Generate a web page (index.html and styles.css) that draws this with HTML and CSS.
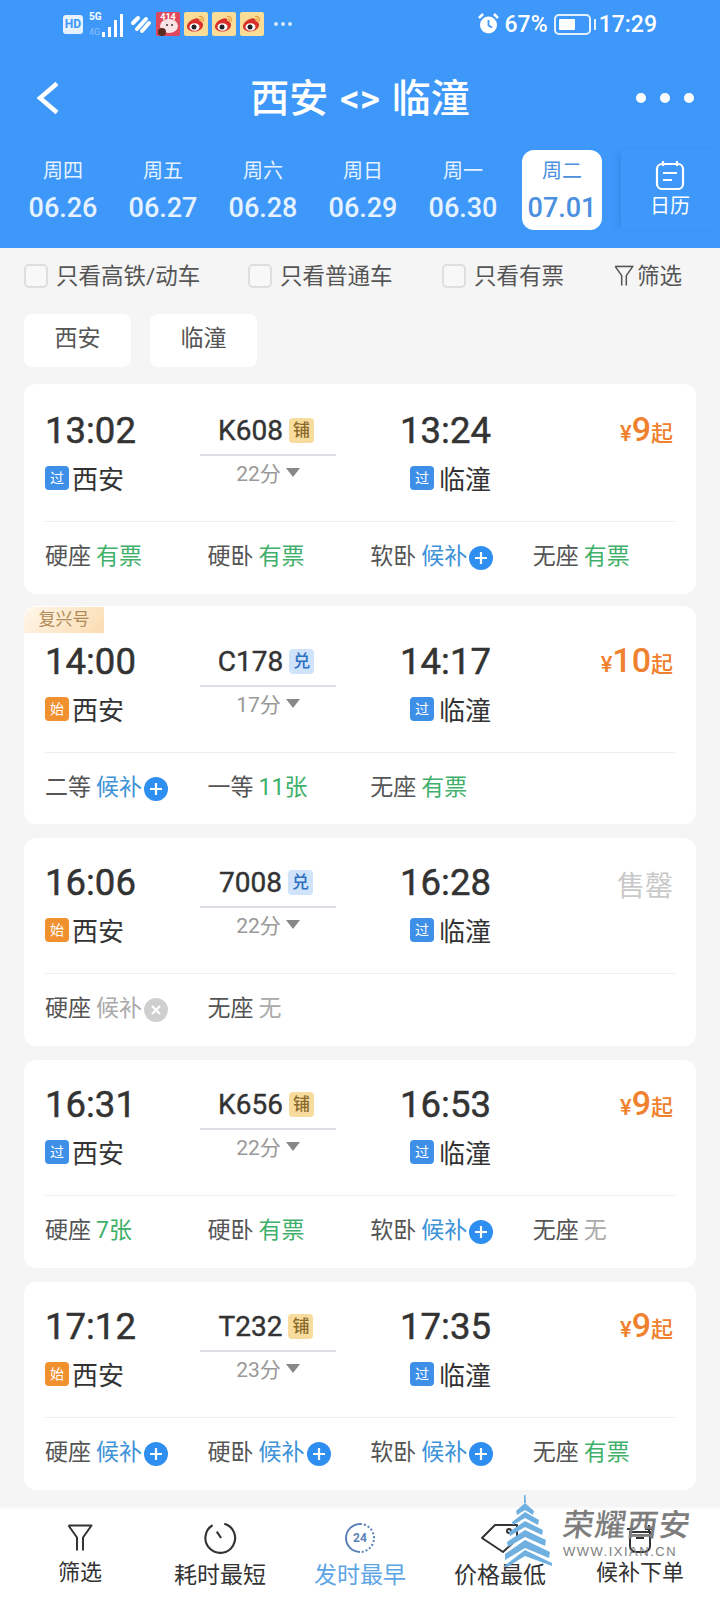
FILE: index.html
```html
<!DOCTYPE html>
<html lang="zh-CN">
<head>
  <meta charset="UTF-8">
  <meta name="viewport" content="width=device-width, initial-scale=1.0">
  <title>西安 - 临潼</title>
  <link rel="stylesheet" href="styles.css">
</head>
<body>
  <svg class="defs">
    <symbol id="weibo" viewBox="0 0 24 24">
      <rect width="24" height="24" rx="2" fill="#f9dc95"/>
      <path d="M10 7c3-1.500 6-.5 5.500 2 2 .5 4 2 3.500 4.500-.7 4-5 6-9 6-3.500 0-7-1.700-7-5 0-3 3.500-6.500 7-7.500z" fill="#d9302a"/>
      <ellipse cx="10.500" cy="15" rx="5" ry="3.800" fill="#fff"/>
      <circle cx="10" cy="15" r="2.500" fill="#222"/>
      <path d="M15 4.500c3-.5 5 2 4.500 5M15.500 7c1.500-.2 2.200 1 2 2.300" fill="none" stroke="#ee9a3a" stroke-width="1.200"/>
    </symbol>
    <symbol id="plus" viewBox="0 0 24 24">
      <circle cx="12" cy="12" r="12" fill="#2f8ff0"/>
      <path d="M12 6v12M6 12h12" stroke="#fff" stroke-width="2.200"/>
    </symbol>
    <symbol id="closed" viewBox="0 0 24 24">
      <circle cx="12" cy="12" r="12" fill="#cfcfcf"/>
      <path d="M8 8l8 8M16 8l-8 8" stroke="#fff" stroke-width="2.200"/>
    </symbol>
    <symbol id="funnel" viewBox="0 0 26 28">
      <path d="M1.500 1.500h23l-8.500 12v13M1.500 1.500l8.500 12v13" fill="none" stroke="currentColor" stroke-width="2" stroke-linejoin="round"/>
    </symbol>
  </svg>

  <header class="top">
    <div class="status-bar">
      <div class="status-left">
        <span class="hd">HD</span>
        <svg class="signal" width="34" height="30" viewBox="0 0 34 30">
          <text x="0" y="11" class="signal-text">5G</text>
          <text x="0" y="26" class="signal-faint">4G</text>
          <rect x="13" y="23" width="3" height="5" fill="#fff"/>
          <rect x="19" y="18" width="3" height="10" fill="#fff"/>
          <rect x="25" y="11" width="3" height="17" fill="#fff"/>
          <rect x="31" y="5" width="3" height="23" fill="#fff"/>
        </svg>
        <svg class="hook" width="22" height="20" viewBox="0 0 22 20">
          <path d="M3 9l5-5M7 15l9-10M12 17l7-8" stroke="#fff" stroke-width="4" stroke-linecap="round" fill="none"/>
        </svg>
        <svg width="24" height="24" viewBox="0 0 24 24">
          <rect width="24" height="24" rx="2" fill="#e0475d"/>
          <ellipse cx="13" cy="14" rx="9" ry="7" fill="#fbe3e6"/>
          <text x="12" y="8" class="app-text">414</text>
          <circle cx="6" cy="20" r="4" fill="#5a2c20"/>
          <circle cx="11" cy="13" r="1" fill="#333"/>
          <circle cx="16" cy="13" r="1" fill="#333"/>
        </svg>
        <svg class="wb" width="24" height="24"><use href="#weibo"/></svg>
        <svg class="wb" width="24" height="24"><use href="#weibo"/></svg>
        <svg class="wb" width="24" height="24"><use href="#weibo"/></svg>
        <span class="more-dots"><i></i><i></i><i></i></span>
      </div>
      <div class="status-right">
        <svg width="21" height="22" viewBox="0 0 21 22">
          <circle cx="10.500" cy="12" r="8.500" fill="#fff"/>
          <path d="M10.500 7v5.500l3.500 2" stroke="#3d98fa" stroke-width="1.800" fill="none"/>
          <path d="M1 5l4-4M20 5l-4-4" stroke="#fff" stroke-width="2.500"/>
        </svg>
        <span class="pct">67%</span>
        <span class="battery"><b></b></span>
        <span class="clock">17:29</span>
      </div>
    </div>

    <div class="title-bar">
      <svg class="back" width="26" height="34" viewBox="0 0 26 34">
        <path d="M22 2.500L5 17l17 14.500" fill="none" stroke="#fff" stroke-width="4.500"/>
      </svg>
      <h1>西安 &lt;&gt; 临潼</h1>
      <span class="menu"><i></i><i></i><i></i></span>
    </div>

    <div class="date-tabs">
      <div class="tab"><span>周四</span><strong>06.26</strong></div>
      <div class="tab"><span>周五</span><strong>06.27</strong></div>
      <div class="tab"><span>周六</span><strong>06.28</strong></div>
      <div class="tab"><span>周日</span><strong>06.29</strong></div>
      <div class="tab"><span>周一</span><strong>06.30</strong></div>
      <div class="tab active"><span>周二</span><strong>07.01</strong></div>
      <div class="calendar">
        <svg width="30" height="30" viewBox="0 0 30 30">
          <rect x="2" y="4" width="26" height="25" rx="5" fill="none" stroke="#fff" stroke-width="2.200"/>
          <path d="M8 1v5M22 1v5M8 13h14M8 20h9" stroke="#fff" stroke-width="2.200"/>
        </svg>
        <span>日历</span>
      </div>
    </div>
  </header>

  <div class="filters">
    <label class="check check-a"><i></i>只看高铁/动车</label>
    <label class="check check-b"><i></i>只看普通车</label>
    <label class="check check-c"><i></i>只看有票</label>
    <span class="filter-link">
      <svg width="20" height="22" viewBox="0 0 26 28"><use href="#funnel"/></svg>筛选
    </span>
  </div>

  <div class="chips">
    <span class="chip">西安</span>
    <span class="chip">临潼</span>
  </div>

  <main class="list">
    <section class="card card-first">
      <div class="head">
        <div class="time">13:02</div>
        <div class="train">K608<em class="berth">铺</em></div>
        <div class="time arrive">13:24</div>
        <div class="price"><small>¥</small>9<small>起</small></div>
        <div class="station"><b class="pass">过</b>西安</div>
        <div class="duration">22分<i class="caret"></i></div>
        <div class="station arrive"><b class="pass">过</b>临潼</div>
      </div>
      <div class="seats">
        <div class="seat">硬座<span class="ok">有票</span></div>
        <div class="seat">硬卧<span class="ok">有票</span></div>
        <div class="seat">软卧<span class="wait">候补</span><svg class="seat-icon"><use href="#plus"/></svg></div>
        <div class="seat">无座<span class="ok">有票</span></div>
      </div>
    </section>

    <section class="card card-tag">
      <span class="tag">复兴号</span>
      <div class="head">
        <div class="time">14:00</div>
        <div class="train">C178<em class="swap">兑</em></div>
        <div class="time arrive">14:17</div>
        <div class="price"><small>¥</small>10<small>起</small></div>
        <div class="station"><b class="start">始</b>西安</div>
        <div class="duration">17分<i class="caret"></i></div>
        <div class="station arrive"><b class="pass">过</b>临潼</div>
      </div>
      <div class="seats">
        <div class="seat">二等<span class="wait">候补</span><svg class="seat-icon"><use href="#plus"/></svg></div>
        <div class="seat">一等<span class="ok">11张</span></div>
        <div class="seat">无座<span class="ok">有票</span></div>
      </div>
    </section>

    <section class="card">
      <div class="head">
        <div class="time">16:06</div>
        <div class="train">7008<em class="swap">兑</em></div>
        <div class="time arrive">16:28</div>
        <div class="sold">售罄</div>
        <div class="station"><b class="start">始</b>西安</div>
        <div class="duration">22分<i class="caret"></i></div>
        <div class="station arrive"><b class="pass">过</b>临潼</div>
      </div>
      <div class="seats">
        <div class="seat">硬座<span class="none">候补</span><svg class="seat-icon"><use href="#closed"/></svg></div>
        <div class="seat">无座<span class="none">无</span></div>
      </div>
    </section>

    <section class="card">
      <div class="head">
        <div class="time">16:31</div>
        <div class="train">K656<em class="berth">铺</em></div>
        <div class="time arrive">16:53</div>
        <div class="price"><small>¥</small>9<small>起</small></div>
        <div class="station"><b class="pass">过</b>西安</div>
        <div class="duration">22分<i class="caret"></i></div>
        <div class="station arrive"><b class="pass">过</b>临潼</div>
      </div>
      <div class="seats">
        <div class="seat">硬座<span class="ok">7张</span></div>
        <div class="seat">硬卧<span class="ok">有票</span></div>
        <div class="seat">软卧<span class="wait">候补</span><svg class="seat-icon"><use href="#plus"/></svg></div>
        <div class="seat">无座<span class="none">无</span></div>
      </div>
    </section>

    <section class="card">
      <div class="head">
        <div class="time">17:12</div>
        <div class="train">T232<em class="berth">铺</em></div>
        <div class="time arrive">17:35</div>
        <div class="price"><small>¥</small>9<small>起</small></div>
        <div class="station"><b class="start">始</b>西安</div>
        <div class="duration">23分<i class="caret"></i></div>
        <div class="station arrive"><b class="pass">过</b>临潼</div>
      </div>
      <div class="seats">
        <div class="seat">硬座<span class="wait">候补</span><svg class="seat-icon"><use href="#plus"/></svg></div>
        <div class="seat">硬卧<span class="wait">候补</span><svg class="seat-icon"><use href="#plus"/></svg></div>
        <div class="seat">软卧<span class="wait">候补</span><svg class="seat-icon"><use href="#plus"/></svg></div>
        <div class="seat">无座<span class="ok">有票</span></div>
      </div>
    </section>
  </main>

  <nav class="bottom-bar">
    <div class="nav-item nav-high">
      <svg width="26" height="28" viewBox="0 0 26 28"><use href="#funnel"/></svg>
      <span>筛选</span>
    </div>
    <div class="nav-item">
      <svg width="34" height="34" viewBox="0 0 32 32" fill="none" stroke="#333" stroke-width="2">
        <path d="M20 2.500A14 14 0 1 1 9 4"/>
        <path d="M13 10l4 6"/>
      </svg>
      <span>耗时最短</span>
    </div>
    <div class="nav-item active">
      <svg width="32" height="32" viewBox="0 0 32 32" fill="none">
        <path d="M16 2a14 14 0 0 0 0 28" stroke="#5a82b8" stroke-width="2"/>
        <path d="M16 2a14 14 0 0 1 0 28" stroke="#5a82b8" stroke-width="2" stroke-dasharray="2 2"/>
        <text x="16" y="20" class="nav-24">24</text>
      </svg>
      <span>发时最早</span>
    </div>
    <div class="nav-item">
      <svg width="40" height="32" viewBox="0 0 40 32" fill="none" stroke="#333" stroke-width="2" stroke-linejoin="round">
        <path d="M2 16L15 3h22v14L23 30z"/>
        <circle cx="29" cy="9" r="2"/>
      </svg>
      <span>价格最低</span>
    </div>
    <div class="nav-item nav-high">
      <svg width="28" height="32" viewBox="0 0 28 32" fill="none" stroke="#333" stroke-width="2">
        <path d="M4 10h20v14a6 6 0 0 1-6 6h-8a6 6 0 0 1-6-6z"/>
        <path d="M1 7h8M19 7h8M23 3v8M10 16h8"/>
      </svg>
      <span>候补下单</span>
    </div>
  </nav>

  <!-- site watermark sits on top of the bottom bar -->
  <div class="watermark">
    <svg width="50" height="72" viewBox="0 0 50 72" fill="#6fb0e0">
      <path d="M21 0h1.500l.5 8h-2z"/>
      <path d="M13 16l9-8 9 8-1 4-8-5-8 5z"/>
      <path d="M9 27l13-10 14 8-1 5-13-7-12 7z"/>
      <path d="M6 37l16-11 18 9-1 5-17-8-15 9z"/>
      <path d="M4 47l18-12 21 10-1 6-20-9-17 10z"/>
      <path d="M2 59l20-14 25 12-1 6-24-10-20 12z"/>
      <path d="M1 71l21-16 27 13v3l-27-10-21 13z"/>
    </svg>
    <div class="mark-text">
      <strong>荣耀西安</strong>
      <span>WWW.IXIAN.CN</span>
    </div>
  </div>
</body>
</html>
```

FILE: styles.css
```css
* {
  box-sizing: border-box;
}
body {
  position: relative;
  display: flex;
  flex-direction: column;
  width: 720px;
  height: 1600px;
  margin: 0;
  overflow: hidden;
  background-color: #f5f5f5;
  color: #333;
  font-family: Roboto, "Noto Sans CJK SC", sans-serif;
}
.defs {
  display: none;
}

/* blue header */
.top {
  height: 248px;
  flex-shrink: 0;
  background-color: #3d98fa;
  color: #fff;
}
.status-bar {
  display: flex;
  justify-content: space-between;
  align-items: center;
  height: 48px;
  padding: 0 63px;
}
.status-left,
.status-right {
  display: flex;
  align-items: center;
}
.status-left {
  gap: 4px;
}
.hd {
  width: 20px;
  height: 19px;
  border-radius: 3px;
  background-color: #e6f1fe;
  color: #3d98fa;
  font-size: 12px;
  font-weight: 700;
  line-height: 19px;
  text-align: center;
}
.signal {
  margin-left: 2px;
}
.hook {
  margin: 0 0 0 3px;
}
.signal-text {
  fill: #fff;
  font-size: 10px;
  font-weight: 700;
}
.signal-faint {
  fill: rgba(255, 255, 255, 0.4);
  font-size: 9px;
}
.app-text {
  fill: #fff;
  font-size: 9px;
  font-weight: 700;
  text-anchor: middle;
}
.more-dots {
  display: flex;
  gap: 3px;
  margin-left: 6px;
}
.more-dots i {
  width: 4px;
  height: 4px;
  border-radius: 50%;
  background-color: #d8e9fd;
}
.status-right {
  gap: 6px;
  font-weight: 500;
}
.pct {
  font-size: 23px;
}
.battery {
  position: relative;
  width: 37px;
  height: 21px;
  padding: 3px;
  border: 2px solid #e6f1fe;
  border-radius: 5px;
}
.battery b {
  display: block;
  width: 62%;
  height: 100%;
  border-radius: 1px;
  background-color: #fff;
}
.battery::after {
  content: "";
  position: absolute;
  top: 3px;
  right: -7px;
  width: 2px;
  height: 11px;
  background-color: #e6f1fe;
}
.clock {
  margin-left: 2px;
  font-size: 23px;
}
.title-bar {
  position: relative;
  display: flex;
  justify-content: center;
  align-items: center;
  height: 100px;
  padding-top: 2px;
}
.title-bar h1 {
  margin: 0;
  font-size: 39px;
  font-weight: 500;
  line-height: 1;
  word-spacing: 2px;
}
.back {
  position: absolute;
  left: 35px;
  top: 33px;
}
.menu {
  position: absolute;
  right: 26px;
  top: 45px;
  display: flex;
  gap: 14px;
}
.menu i {
  width: 10px;
  height: 10px;
  border-radius: 50%;
  background-color: #fff;
}

/* date tabs */
.date-tabs {
  display: flex;
  height: 80px;
  padding-left: 13px;
  margin-top: 2px;
}
.tab {
  display: flex;
  flex-direction: column;
  align-items: center;
  width: 80px;
  margin: 0 10px;
  border-radius: 12px;
  color: #e6f2ff;
}
.tab span {
  height: 41px;
  font-size: 20px;
  line-height: 42px;
}
.tab strong {
  font-size: 27px;
  font-weight: 500;
  line-height: 34px;
}
.tab.active {
  margin-left: 9px;
  background-color: #fff;
  color: #4a8fe0;
}
.calendar {
  display: flex;
  flex-direction: column;
  align-items: center;
  width: 98px;
  margin-left: 9px;
  padding-top: 10px;
  box-shadow: -5px 0 6px -3px rgba(40, 110, 200, 0.35);
  font-size: 20px;
  line-height: 33px;
}

/* filter row */
.filters {
  display: flex;
  align-items: center;
  height: 56px;
  padding: 0 0 4px 24px;
  font-size: 22.5px;
  color: #555;
}
.check {
  display: flex;
  align-items: center;
  gap: 8px;
}
.check i {
  width: 24px;
  height: 24px;
  margin-top: 4px;
  border: 2px solid #dedede;
  border-radius: 5px;
  background-color: #f8f8f8;
}
.check-a {
  width: 224px;
}
.check-b {
  width: 194px;
}
.check-c {
  width: 172px;
}
.filter-link {
  display: flex;
  align-items: center;
  gap: 3px;
}
.filter-link svg {
  margin-top: 4px;
}
.chips {
  display: flex;
  gap: 19px;
  height: 53px;
  margin: 10px 0 17px;
  padding-left: 24px;
}
.chip {
  width: 107px;
  border-radius: 8px;
  background-color: #fff;
  color: #555;
  font-size: 23px;
  line-height: 50px;
  text-align: center;
}

/* train cards */
.list {
  flex: 1;
  padding: 0 24px;
}
.card {
  position: relative;
  height: 208px;
  margin-bottom: 14px;
  padding: 0 21px;
  border-radius: 12px;
  background-color: #fff;
}
.card-first {
  height: 210px;
  margin-bottom: 12px;
  padding-top: 2px;
}
.card-tag {
  height: 218px;
  padding-top: 11px;
}
.tag {
  position: absolute;
  left: 0;
  top: 1px;
  width: 80px;
  height: 26px;
  border-radius: 12px 0 0 0;
  background: linear-gradient(135deg, #fff6ea, #fbdcb2);
  color: #b08a55;
  font-size: 17px;
  line-height: 25px;
  text-align: center;
}
.head {
  display: grid;
  grid-template-columns: 155px 136px 155px 1fr;
  grid-template-rows: 49px 49px;
  padding-top: 21px;
  padding-bottom: 16px;
  border-bottom: 1px solid #eee;
}
.time {
  font-size: 36.5px;
  font-weight: 400;
  line-height: 47px;
  -webkit-text-stroke: 0.5px #333;
}
.arrive {
  justify-content: flex-end;
  text-align: right;
}
.train {
  display: flex;
  justify-content: center;
  align-items: center;
  gap: 6px;
  height: 49px;
  padding: 0 4px 1px 0;
  border-bottom: 2px solid #dde0e6;
  font-size: 28px;
  font-weight: 400;
  -webkit-text-stroke: 0.4px #333;
}
.train em {
  width: 25px;
  height: 25px;
  border-radius: 4px;
  font-size: 17px;
  font-style: normal;
  font-weight: 500;
  line-height: 24px;
  text-align: center;
  -webkit-text-stroke: 0;
}
.berth {
  background-color: #f8dc9e;
  color: #8a6a2a;
}
.swap {
  background-color: #cfe3fb;
  color: #2f6fc0;
}
.price {
  justify-self: end;
  margin-right: 2px;
  color: #f0812e;
  font-size: 34px;
  font-weight: 500;
  line-height: 44px;
}
.price small {
  font-size: 22px;
  font-weight: 500;
}
.sold {
  justify-self: end;
  margin-right: 2px;
  color: #c9c9c9;
  font-size: 28px;
  line-height: 56px;
}
.station {
  display: flex;
  align-items: center;
  gap: 3px;
  height: 43px;
  color: #333;
  font-size: 26px;
}
.station.arrive {
  gap: 5px;
}
.station b {
  width: 24px;
  height: 24px;
  border-radius: 4px;
  color: #fff;
  font-size: 14px;
  font-weight: 400;
  line-height: 24px;
  text-align: center;
}
.pass {
  background-color: #3d8fe8;
}
.start {
  background-color: #f0902f;
}
.duration {
  display: flex;
  justify-content: center;
  align-items: center;
  gap: 5px;
  height: 32px;
  color: #999;
  font-size: 21px;
}
.caret {
  width: 0;
  height: 0;
  border-top: 9px solid #888;
  border-left: 7px solid transparent;
  border-right: 7px solid transparent;
}
.seats {
  display: grid;
  grid-template-columns: repeat(4, 162.6px);
  height: 64px;
}
.seat {
  display: flex;
  align-items: center;
  color: #555;
  font-size: 23px;
}
.seat span {
  margin-left: 5px;
}
.ok {
  color: #3fb06a;
}
.wait {
  color: #3e92d8;
}
.none {
  color: #aaa;
}
.seat-icon {
  width: 24px;
  height: 24px;
  margin: 8px 0 0 2px;
}

/* bottom bar */
.bottom-bar {
  display: flex;
  flex-shrink: 0;
  height: 93px;
  padding: 0 10px;
  border-top: 2px solid #fafafa;
  background-color: #fff;
}
.nav-item {
  display: flex;
  flex-direction: column;
  align-items: center;
  width: 140px;
  padding-top: 12px;
  font-size: 23px;
  color: #333;
}
.nav-item svg {
  height: 34px;
}
.nav-item span {
  margin-top: 5px;
  line-height: 32px;
}
.nav-high span {
  margin-top: 2px;
  font-size: 22px;
}
.nav-item.active span {
  color: #5ea5e6;
}
.nav-24 {
  fill: #5a82b8;
  font-size: 12px;
  font-weight: 700;
  text-anchor: middle;
}
.watermark {
  position: absolute;
  left: 503px;
  top: 1495px;
  display: flex;
  gap: 10px;
}
.mark-text {
  display: flex;
  flex-direction: column;
  padding-top: 12px;
  color: #7d7d7d;
}
.mark-text strong {
  font-size: 31px;
  font-weight: 500;
  line-height: 38px;
  letter-spacing: 1px;
  transform: skewX(-8deg);
}
.mark-text span {
  font-family: "Liberation Sans", sans-serif;
  font-size: 13px;
  line-height: 14px;
  letter-spacing: 1.5px;
}
```
